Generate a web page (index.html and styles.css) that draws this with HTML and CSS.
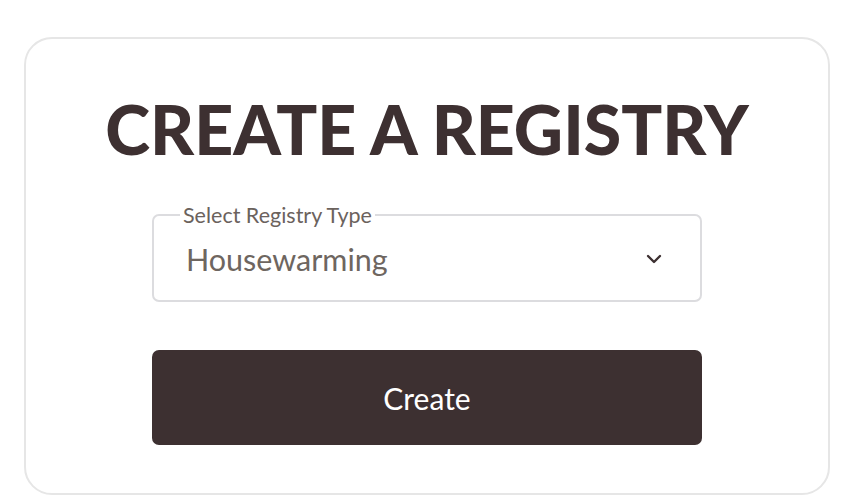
FILE: index.html
```html
<!DOCTYPE html>
<html>
<head>
<meta charset="utf-8">
<link rel="stylesheet" href="styles.css">
</head>
<body>
<div class="card">
  <h1 class="title">CREATE A REGISTRY</h1>
  <div class="form">
    <fieldset class="field">
      <legend class="field-label">Select Registry Type</legend>
      <div class="field-row">
        <span class="field-value">Housewarming</span>
        <svg class="chevron" width="16" height="10" viewBox="0 0 16 10"><path d="M2 2 L8 8 L14 2" fill="none" stroke="#3d3031" stroke-width="2.4" stroke-linecap="round" stroke-linejoin="round"/></svg>
      </div>
    </fieldset>
    <button class="btn">Create</button>
  </div>
</div>
</body>
</html>
```
FILE: styles.css
```css
html, body { margin: 0; padding: 0; background: #fff; }
body { font-family: "Lato", "Inter", sans-serif; color: #3d3031; }
.card {
  box-sizing: border-box;
  margin: 37px 0 0 24px;
  width: 806px;
  height: 458px;
  border: 2px solid #e6e6e6;
  border-radius: 28px;
  display: flex;
  flex-direction: column;
  align-items: center;
  padding-top: 50px;
}
.title {
  margin: 0;
  font-family: "Lato", sans-serif;
  font-weight: 900;
  font-size: 68px;
  line-height: 80px;
  color: #3d3031;
}
.form { width: 550px; display: flex; flex-direction: column; margin-top: 33px; }
.field {
  margin: 0;
  border: 2px solid #dcdcdf;
  border-radius: 7px;
  padding: 0 38px 0 32px;
  height: 100px;
  box-sizing: border-box;
}
.field-label {
  padding: 0 3px;
  margin-left: -6px;
  font-size: 21.5px;
  line-height: 26px;
  color: #6b625d;
}
.field-row { display: flex; align-items: center; justify-content: space-between; height: 61px; }
.field-value { font-size: 30.5px; color: #6e6660; }
.chevron { margin-top: 0; }
.btn {
  margin-top: 48px;
  height: 95px;
  border: none;
  border-radius: 7px;
  background: #3d3031;
  color: #fff;
  font-family: "Lato", sans-serif;
  font-size: 30px;
}
```
